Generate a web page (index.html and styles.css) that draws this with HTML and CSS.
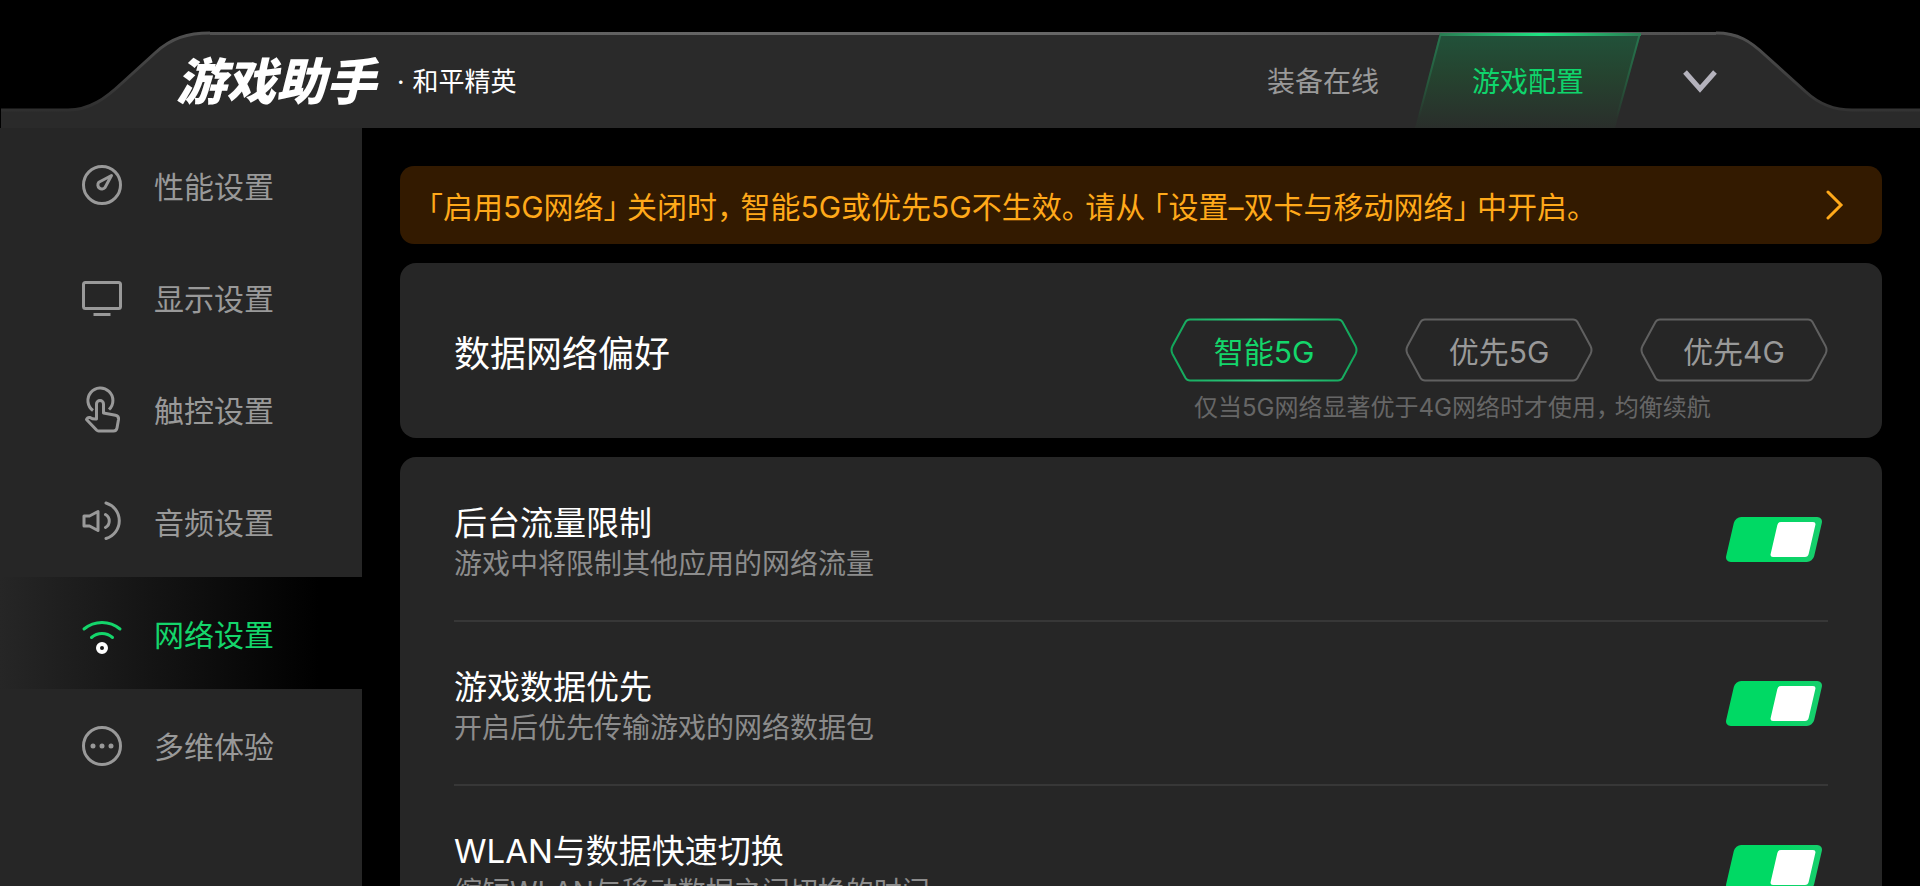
FILE: index.html
```
<!DOCTYPE html>
<html lang="zh-CN">
<head>
  <meta charset="UTF-8">
  <title>游戏助手 - 网络设置</title>
  <meta name="viewport" content="width=device-width, initial-scale=1.0">
  <link rel="stylesheet" href="styles.css">
</head>
<body>
  <header class="header">
    <div class="header-bg" aria-hidden="true">
      <svg class="cap cap-left" viewBox="0 0 210 97" width="210" height="97">
        <path class="cap-fill" d="M1 97V79H68C90 79 106 67 122 52L155 21C171 7 188 1 210 1V97Z"/>
        <path d="M1 79H68C90 79 106 67 122 52L155 22C171 7 188 2 210 2" fill="none" stroke="url(#edgeLeft)" stroke-width="3"/>
        <defs>
          <linearGradient id="edgeLeft" x1="0" y1="1" x2="0" y2="0">
            <stop offset="0" stop-color="#2f2f2f"/>
            <stop offset="1" stop-color="#505050"/>
          </linearGradient>
        </defs>
      </svg>
      <div class="header-fill"></div>
      <svg class="cap cap-right" viewBox="0 0 204 97" width="204" height="97">
        <path class="cap-fill" d="M0 97V1C22 1 34 9 49 23L90 61C104 74 118 79 136 79H204V97Z"/>
        <path d="M0 2C22 2 34 10 49 24L90 61C104 74 118 79 136 79H204" fill="none" stroke="url(#edgeRight)" stroke-width="3"/>
        <defs>
          <linearGradient id="edgeRight" x1="0" y1="1" x2="0" y2="0">
            <stop offset="0" stop-color="#333"/>
            <stop offset="1" stop-color="#505050"/>
          </linearGradient>
        </defs>
      </svg>
    </div>

    <div class="brand">
      <h1 class="logo">游戏助手</h1>
      <span class="game-name"><span class="dot">·</span>和平精英</span>
    </div>

    <nav class="tabs" aria-label="主菜单">
      <a class="tab" href="#gear">装备在线</a>
      <a class="tab active" href="#config" aria-current="page">
        <svg class="tab-bg" viewBox="0 0 226 97" preserveAspectRatio="none" aria-hidden="true">
          <defs>
            <linearGradient id="tabFill" x1="0" y1="0" x2="0" y2="1">
              <stop offset="0" stop-color="#21523a"/>
              <stop offset="0.45" stop-color="#25432f"/>
              <stop offset="1" stop-color="#2a2e2b"/>
            </linearGradient>
            <linearGradient id="tabSide" x1="0" y1="0" x2="0" y2="1">
              <stop offset="0" stop-color="#27754e"/>
              <stop offset="0.9" stop-color="#27754e" stop-opacity="0"/>
            </linearGradient>
            <linearGradient id="tabTop" x1="0" y1="0" x2="1" y2="0">
              <stop offset="0" stop-color="#2a7d53"/>
              <stop offset="0.5" stop-color="#1fe583"/>
              <stop offset="1" stop-color="#2a7d53"/>
            </linearGradient>
          </defs>
          <path d="M25 2H226L200 97H0Z" fill="url(#tabFill)"/>
          <path d="M26 2L1 97M225 2L199 97" stroke="url(#tabSide)" stroke-width="2"/>
          <rect x="25" y="2" width="201" height="3" fill="url(#tabTop)"/>
        </svg>
        <span>游戏配置</span>
      </a>
    </nav>
    <button class="collapse" type="button" aria-label="收起">
      <svg viewBox="0 0 34 24" width="34" height="24">
        <path d="M2 2L17 19L32 2" fill="none" stroke="#b4b2bc" stroke-width="5"/>
      </svg>
    </button>
  </header>

  <div class="layout">
    <nav class="sidebar" aria-label="设置分类">
      <a class="side-item" href="#performance">
        <svg class="icon" viewBox="0 0 44 48">
          <circle cx="22" cy="24" r="18.5"/>
          <path d="M31.5 14.5L18.8 21.3A4 4 0 1 0 25 26.5Z"/>
        </svg>
        <span>性能设置</span>
      </a>
      <a class="side-item" href="#display">
        <svg class="icon" viewBox="0 0 44 48">
          <rect x="3.5" y="9.5" width="37" height="26" rx="2"/>
          <path d="M13.5 41.5H30.5"/>
        </svg>
        <span>显示设置</span>
      </a>
      <a class="side-item" href="#touch">
        <svg class="icon" viewBox="0 0 44 48">
          <path d="M13 25.5A12.5 12.5 0 1 1 29 24.5"/>
          <path d="M16.5 34V19a3.5 3.5 0 0 1 7 0V28L35.5 30.3Q39 31 38.5 34.5L37 43Q36.5 46 33.5 46H18.5Q17.5 46 16.5 45L6.5 34.5Q7.5 32 10 32.5Q13 34.5 16.5 34Z"/>
        </svg>
        <span>触控设置</span>
      </a>
      <a class="side-item" href="#audio">
        <svg class="icon" viewBox="0 0 44 48">
          <path d="M4 19H9.5L18 14.5V33.5L9.5 29H4Z"/>
          <path d="M25.5 17.5A7.5 7.5 0 0 1 25.5 30.5M26 6A18.5 18.5 0 0 1 26 41.5" stroke-linecap="round"/>
        </svg>
        <span>音频设置</span>
      </a>
      <a class="side-item active" href="#network" aria-current="page">
        <svg class="icon" viewBox="0 0 44 48">
          <path d="M4 20A28 28 0 0 1 40 20M11.5 28.5A16 16 0 0 1 32.5 28.5" stroke-linecap="round"/>
          <circle class="icon-dot" cx="22" cy="39" r="4"/>
        </svg>
        <span>网络设置</span>
      </a>
      <a class="side-item" href="#more">
        <svg class="icon" viewBox="0 0 44 48">
          <circle cx="22" cy="25" r="18.5"/>
          <path d="M13 25h.01M22 25h.01M31 25h.01" stroke-width="5" stroke-linecap="round"/>
        </svg>
        <span>多维体验</span>
      </a>
    </nav>

    <main class="content">
      <a class="notice" href="#sim">
        <span>「启用5G网络」 关闭时， 智能5G或优先5G不生效。 请从 「设置–双卡与移动网络」 中开启。</span>
        <svg viewBox="0 0 18 30" width="18" height="30" aria-hidden="true">
          <path d="M2 2L15 15L2 28" fill="none" stroke="#ffa91a" stroke-width="3" stroke-linecap="round"/>
        </svg>
      </a>

      <section class="card preference">
        <h2 class="pref-title" id="pref-title">数据网络偏好</h2>
        <div class="pref-body">
          <div class="options" role="radiogroup" aria-labelledby="pref-title">
            <label class="option">
              <input type="radio" name="network" checked>
              <svg viewBox="0 0 188 64" aria-hidden="true">
                <defs>
                  <linearGradient id="hexGreen" x1="0" y1="0" x2="1" y2="0">
                    <stop offset="0" stop-color="#12a65a"/>
                    <stop offset="0.5" stop-color="#35d487"/>
                    <stop offset="1" stop-color="#12a65a"/>
                  </linearGradient>
                </defs>
                <path d="M20 1.5H168Q171 1.5 172.5 4L185.5 28Q187.5 32 185.5 36L172.5 60Q171 62.5 168 62.5H20Q17 62.5 15.5 60L2.5 36Q0.5 32 2.5 28L15.5 4Q17 1.5 20 1.5Z"/>
              </svg>
              <span>智能5G</span>
            </label>
            <label class="option">
              <input type="radio" name="network">
              <svg viewBox="0 0 188 64" aria-hidden="true">
                <path d="M20 1.5H168Q171 1.5 172.5 4L185.5 28Q187.5 32 185.5 36L172.5 60Q171 62.5 168 62.5H20Q17 62.5 15.5 60L2.5 36Q0.5 32 2.5 28L15.5 4Q17 1.5 20 1.5Z"/>
              </svg>
              <span>优先5G</span>
            </label>
            <label class="option">
              <input type="radio" name="network">
              <svg viewBox="0 0 188 64" aria-hidden="true">
                <path d="M20 1.5H168Q171 1.5 172.5 4L185.5 28Q187.5 32 185.5 36L172.5 60Q171 62.5 168 62.5H20Q17 62.5 15.5 60L2.5 36Q0.5 32 2.5 28L15.5 4Q17 1.5 20 1.5Z"/>
              </svg>
              <span>优先4G</span>
            </label>
          </div>
          <p class="pref-note">仅当5G网络显著优于4G网络时才使用， 均衡续航</p>
        </div>
      </section>

      <section class="card switches">
        <div class="row">
          <div class="row-text">
            <label class="row-title" for="limit">后台流量限制</label>
            <p class="row-desc">游戏中将限制其他应用的网络流量</p>
          </div>
          <input class="switch" type="checkbox" id="limit" checked>
        </div>
        <div class="row">
          <div class="row-text">
            <label class="row-title" for="priority">游戏数据优先</label>
            <p class="row-desc">开启后优先传输游戏的网络数据包</p>
          </div>
          <input class="switch" type="checkbox" id="priority" checked>
        </div>
        <div class="row">
          <div class="row-text">
            <label class="row-title" for="wlan">WLAN与数据快速切换</label>
            <p class="row-desc">缩短WLAN与移动数据之间切换的时间</p>
          </div>
          <input class="switch" type="checkbox" id="wlan" checked>
        </div>
      </section>
    </main>
  </div>
</body>
</html>
```
FILE: styles.css
```
/* Reset & base */
*, *::before, *::after {
  box-sizing: border-box;
}
body, html {
  margin: 0;
  padding: 0;
  height: 100%;
  overflow: hidden;
}
body {
  display: flex;
  flex-direction: column;
  padding-top: 31px;
  background: #000;
  color: #fff;
  font-family: Inter, 'Noto Sans CJK SC', sans-serif;
}
h1, h2, p {
  margin: 0;
  font-weight: 400;
}
a {
  color: inherit;
  text-decoration: none;
}

/* Header */
.header {
  position: relative;
  z-index: 0;
  flex: none;
  display: flex;
  align-items: center;
  height: 97px;
  padding: 0 203px 0 176px;
}
.header-bg {
  position: absolute;
  inset: 0;
  z-index: -1;
  display: flex;
}
.cap {
  flex: none;
}
.cap-fill {
  fill: #2a2a2a;
}
.header-fill {
  flex: 1;
  margin-top: 1px;
  background: #2a2a2a;
  border-top: 3px solid;
  border-image: linear-gradient(to right, #505050, #666 35%, #666 60%, #505050) 1;
}
.brand {
  display: flex;
  align-items: center;
  gap: 21px;
  padding-top: 4px;
}
.logo {
  font-size: 50px;
  line-height: 56px;
  font-weight: 900;
  font-style: italic;
}
.game-name {
  display: flex;
  gap: 8px;
  font-size: 26px;
  line-height: 40px;
}

/* Tabs */
.tabs {
  display: flex;
  align-self: stretch;
  gap: 36px;
  margin-left: auto;
}
.tab {
  display: flex;
  align-items: center;
  color: #999;
  font-size: 28px;
}
.tab.active {
  position: relative;
  z-index: 0;
  justify-content: center;
  width: 226px;
  color: #0fd56c;
}
.tab-bg {
  position: absolute;
  inset: 0;
  z-index: -1;
  width: 100%;
  height: 100%;
}
.collapse {
  display: flex;
  margin-left: 42px;
  padding: 4px 0 0;
  border: 0;
  background: none;
}

/* Page layout */
.layout {
  flex: 1;
  min-height: 0;
  display: flex;
}

/* Sidebar */
.sidebar {
  flex: none;
  width: 362px;
  padding-top: 1px;
  background: #262626;
}
.side-item {
  display: flex;
  align-items: center;
  gap: 30px;
  height: 112px;
  padding-left: 80px;
  color: #999;
  font-size: 30px;
}
.side-item.active {
  color: #14d66b;
  background: linear-gradient(to right, #262626, #000 88%);
}
.icon {
  width: 44px;
  height: 48px;
  fill: none;
  stroke: currentColor;
  stroke-width: 3;
  stroke-linejoin: round;
}
.icon-dot {
  stroke: #fff;
  stroke-width: 4;
}

/* Content */
.content {
  flex: 1;
  display: flex;
  flex-direction: column;
  gap: 19px;
  padding: 38px 38px 0;
}
.notice {
  flex: none;
  display: flex;
  align-items: center;
  justify-content: space-between;
  height: 78px;
  padding: 0 38px 0 28px;
  border-radius: 14px;
  background: #331a00;
  color: #ffa91a;
  font-size: 30px;
  white-space: nowrap;
  font-feature-settings: "halt";
}
.card {
  flex: none;
  padding: 0 54px;
  border-radius: 16px;
  background: #262626;
}

/* Network preference */
.preference {
  display: flex;
  align-items: center;
  justify-content: space-between;
  height: 175px;
}
.pref-title {
  font-size: 36px;
}
.pref-body {
  padding-top: 43px;
}
.options {
  display: flex;
  gap: 47px;
}
.option {
  position: relative;
  display: flex;
  align-items: center;
  justify-content: center;
  width: 188px;
  height: 64px;
  color: #999;
  font-size: 30px;
}
.option input {
  position: absolute;
  inset: 0;
  margin: 0;
  opacity: 0;
}
.option svg {
  position: absolute;
  inset: 0;
  fill: none;
  stroke: #606060;
  stroke-width: 2;
}
.option input:checked ~ svg {
  stroke: url(#hexGreen);
}
.option input:checked ~ span {
  color: #14d66b;
}
.pref-note {
  padding: 8px 0 0 24px;
  color: #666;
  font-size: 24px;
  line-height: 36px;
  font-feature-settings: "halt";
}

/* Switch rows */
.switches {
  padding-top: 1px;
}
.row {
  display: flex;
  align-items: center;
  justify-content: space-between;
  height: 164px;
  padding-right: 10px;
  border-bottom: 2px solid #373737;
}
.row:last-child {
  border-bottom-color: transparent;
}
.row-text {
  padding-top: 8px;
}
.row-title {
  display: block;
  font-size: 33px;
  line-height: 42px;
}
.row-desc {
  color: #8c8c8c;
  font-size: 28px;
  line-height: 40px;
}
.switch {
  appearance: none;
  display: flex;
  justify-content: flex-start;
  width: 88px;
  height: 45px;
  margin: 0;
  padding: 5px 6px;
  border-radius: 6px;
  background: #555;
  transform: skewX(-13deg);
}
.switch::before {
  content: "";
  width: 38px;
  height: 35px;
  border-radius: 3px;
  background: #fff;
}
.switch:checked {
  justify-content: flex-end;
  background: linear-gradient(to right, #00d964 50%, #16cf6c);
}
```
